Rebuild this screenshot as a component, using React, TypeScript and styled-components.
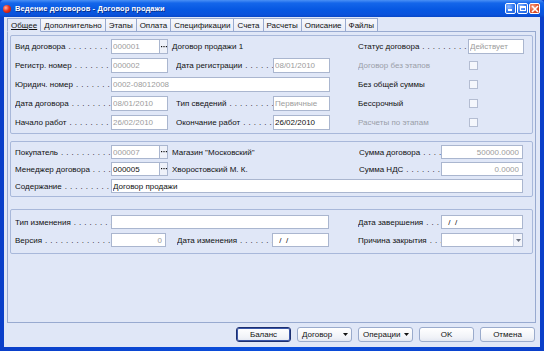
import React from 'react';
import styled, { createGlobalStyle } from 'styled-components';

const GlobalStyle = createGlobalStyle`
  html, body {
    margin: 0;
    padding: 0;
    background: #ffffff;
  }
  body {
    font-family: "Liberation Sans", Arial, sans-serif;
    font-size: 8px;
    color: #111111;
  }
`;

const tabs = [
  'Общее',
  'Дополнительно',
  'Этапы',
  'Оплата',
  'Спецификации',
  'Счета',
  'Расчеты',
  'Описание',
  'Файлы',
];

function App() {
  return (
    <>
      <GlobalStyle />
      <Window>
        <TitleBar>
          <AppIcon />
          <Title>Ведение договоров - Договор продажи</Title>
          <Controls>
            <CtrlButton>
              <MinGlyph />
            </CtrlButton>
            <CtrlButton>
              <MaxGlyph />
            </CtrlButton>
            <CtrlButton $close>
              <svg width="8" height="8" viewBox="0 0 8 8">
                <path d="M1 1L7 7M7 1L1 7" stroke="#fff" strokeWidth="1.6" />
              </svg>
            </CtrlButton>
          </Controls>
        </TitleBar>

        <Frame>
          <TabStrip>
            {tabs.map((t, i) => (
              <Tab key={t} $active={i === 0}>
                {t}
              </Tab>
            ))}
          </TabStrip>

          <TabPanel>
            <Group $pt={3} $pb={3}>
              <Grid $cols="96px 57px 8px 97px 57px 28px 110px 56px" $row={15} $gap={4}>
                <Label $col="1" $dots>Вид договора</Label>
                <Cell $col="2">
                  <Field $muted value="000001" readOnly />
                  <Ellipsis />
                </Cell>
                <Text $col="3 / 6">Договор продажи 1</Text>
                <Label $col="7" $dots>Статус договора</Label>
                <Cell $col="8">
                  <Field $muted value="Действует" readOnly />
                </Cell>

                <Label $col="1" $dots>Регистр. номер</Label>
                <Cell $col="2">
                  <Field $muted value="000002" readOnly />
                </Cell>
                <Label $col="4" $dots>Дата регистрации</Label>
                <Cell $col="5">
                  <Field $muted value="08/01/2010" readOnly />
                </Cell>
                <Label $col="7" $muted>Договор без этапов</Label>
                <Cell $col="8">
                  <Check />
                </Cell>

                <Label $col="1" $dots>Юридич. номер</Label>
                <Cell $col="2 / 6">
                  <Field $muted value="0002-08012008" readOnly />
                </Cell>
                <Label $col="7">Без общей суммы</Label>
                <Cell $col="8">
                  <Check />
                </Cell>

                <Label $col="1" $dots>Дата договора</Label>
                <Cell $col="2">
                  <Field $muted value="08/01/2010" readOnly />
                </Cell>
                <Label $col="4" $dots>Тип сведений</Label>
                <Cell $col="5">
                  <Field $muted value="Первичные" readOnly />
                </Cell>
                <Label $col="7">Бессрочный</Label>
                <Cell $col="8">
                  <Check />
                </Cell>

                <Label $col="1" $dots>Начало работ</Label>
                <Cell $col="2">
                  <Field $muted value="26/02/2010" readOnly />
                </Cell>
                <Label $col="4" $dots>Окончание работ</Label>
                <Cell $col="5">
                  <Field value="26/02/2010" readOnly />
                </Cell>
                <Label $col="7" $muted>Расчеты по этапам</Label>
                <Cell $col="8">
                  <Check />
                </Cell>
              </Grid>
            </Group>

            <Group $mt={7} $pt={3} $pb={3}>
              <Grid $cols="96px 57px 191px 82px 82px" $row={14} $gap={3}>
                <Label $col="1" $dots>Покупатель</Label>
                <Cell $col="2">
                  <Field $muted value="000007" readOnly />
                  <Ellipsis />
                </Cell>
                <Text $col="3">Магазин "Московский"</Text>
                <Label $col="4" $dots>Сумма договора</Label>
                <Cell $col="5">
                  <Field $muted $right value="50000.0000" readOnly />
                </Cell>

                <Label $col="1" $dots>Менеджер договора</Label>
                <Cell $col="2">
                  <Field value="000005" readOnly />
                  <Ellipsis />
                </Cell>
                <Text $col="3">Хворостовский М. К.</Text>
                <Label $col="4" $dots>Сумма НДС</Label>
                <Cell $col="5">
                  <Field $muted $right value="0.0000" readOnly />
                </Cell>

                <Label $col="1" $dots>Содержание</Label>
                <Cell $col="2 / 6">
                  <Field value="Договор продажи" readOnly />
                </Cell>
              </Grid>
            </Group>

            <Group $mt={12} $pt={5} $pb={6}>
              <Grid $cols="96px 55px 11px 95px 57px 29px 83px 82px" $row={14} $gap={4}>
                <Label $col="1" $dots>Тип изменения</Label>
                <Cell $col="2 / 6">
                  <Field value="" readOnly />
                </Cell>
                <Label $col="7" $dots>Дата завершения</Label>
                <Cell $col="8">
                  <Field $date value=" /  /" readOnly />
                </Cell>

                <Label $col="1" $dots>Версия</Label>
                <Cell $col="2">
                  <Field $muted $right value="0" readOnly />
                </Cell>
                <Label $col="4" $dots>Дата изменения</Label>
                <Cell $col="5">
                  <Field $date value=" /  /" readOnly />
                </Cell>
                <Label $col="7" $dots>Причина закрытия</Label>
                <Cell $col="8">
                  <Combo>
                    <ComboArrow>
                      <svg width="5" height="3" viewBox="0 0 5 3">
                        <path d="M0 0H5L2.5 3Z" fill="#6b7280" />
                      </svg>
                    </ComboArrow>
                  </Combo>
                </Cell>
              </Grid>
            </Group>
          </TabPanel>

          <Footer>
            <Button $default>Баланс</Button>
            <Button $menu>
              Договор
              <Caret />
            </Button>
            <Button $menu>
              Операции
              <Caret />
            </Button>
            <Button>OK</Button>
            <Button>Отмена</Button>
          </Footer>
        </Frame>
      </Window>
    </>
  );
}

function Caret() {
  return (
    <CaretBox>
      <svg width="5" height="3" viewBox="0 0 5 3">
        <path d="M0 0H5L2.5 3Z" fill="#111" />
      </svg>
    </CaretBox>
  );
}

function Ellipsis() {
  return (
    <EllipsisBox>
      <svg width="6" height="2" viewBox="0 0 6 2">
        <rect x="0" y="0" width="1.2" height="1.2" fill="#111" />
        <rect x="2.4" y="0" width="1.2" height="1.2" fill="#111" />
        <rect x="4.8" y="0" width="1.2" height="1.2" fill="#111" />
      </svg>
    </EllipsisBox>
  );
}

export default App;

const Window = styled.div`
  width: 544px;
  height: 351px;
  box-sizing: border-box;
  display: flex;
  flex-direction: column;
  background: linear-gradient(90deg, #0a3fc9, #0b4fdc 50%, #0a3fc9);
`;

const TitleBar = styled.div`
  height: 17px;
  flex: none;
  display: flex;
  align-items: center;
  padding: 0 3px 0 3px;
  background: linear-gradient(
    #4a90f5 0%,
    #1466ea 18%,
    #0758e2 55%,
    #0a53dc 85%,
    #0847c8 100%
  );
  border-radius: 4px 4px 0 0;
`;

const AppIcon = styled.span`
  width: 8px;
  height: 8px;
  border-radius: 50%;
  background: radial-gradient(circle at 35% 35%, #ffb0a0 0%, #e8321e 45%, #9c1408 100%);
  margin-right: 4px;
`;

const Title = styled.span`
  flex: 1;
  color: #ffffff;
  font-weight: bold;
  font-size: 7.5px;
  letter-spacing: 0.1px;
  text-shadow: 1px 1px 0 #0a2f8c;
  white-space: nowrap;
`;

const Controls = styled.div`
  display: flex;
  gap: 1px;
  margin-right: 1px;
`;

const CtrlButton = styled.span<{ $close?: boolean }>`
  width: 11px;
  height: 11px;
  box-sizing: border-box;
  border: 1px solid #ffffff;
  border-radius: 2px;
  display: flex;
  align-items: center;
  justify-content: center;
  position: relative;
  background: ${(p) =>
    p.$close
      ? 'radial-gradient(circle at 30% 30%, #f6a184, #e1542c 55%, #c2341a)'
      : 'radial-gradient(circle at 30% 30%, #8cb8ff, #3179f2 55%, #2260d6)'};
`;

const MinGlyph = styled.span`
  position: absolute;
  left: 2px;
  bottom: 2px;
  width: 4px;
  height: 2px;
  background: #ffffff;
`;

const MaxGlyph = styled.span`
  width: 6px;
  height: 5px;
  box-sizing: border-box;
  border: 1px solid #ffffff;
  border-top-width: 2px;
`;

const Frame = styled.div`
  flex: 1;
  margin: 0 4px 4px;
  padding: 1px 4px 0 3px;
  background: #e0e7f7;
  display: flex;
  flex-direction: column;
  min-height: 0;
`;

const TabStrip = styled.div`
  display: flex;
  height: 14px;
  flex: none;
  position: relative;
  z-index: 1;
`;

const Tab = styled.div<{ $active?: boolean }>`
  display: flex;
  align-items: center;
  padding: 0 3px;
  border: 1px solid #98aad0;
  border-left-width: ${(p) => (p.$active ? '1px' : '0')};
  border-bottom: ${(p) => (p.$active ? '1px solid #e0e7f7' : '1px solid #98aad0')};
  background: ${(p) => (p.$active ? '#e0e7f7' : 'linear-gradient(#f7f8fc, #e8ecf7)')};
  text-decoration: ${(p) => (p.$active ? 'underline' : 'none')};
  white-space: nowrap;
  color: #111;
`;

const TabPanel = styled.div`
  flex: 1;
  margin-top: -1px;
  border: 1px solid #98aad0;
  padding: 3px 2px;
  display: flex;
  flex-direction: column;
  min-height: 0;
`;

const Group = styled.div<{ $mt?: number; $pt: number; $pb: number }>`
  margin-top: ${(p) => p.$mt ?? 0}px;
  padding: ${(p) => p.$pt}px 4px ${(p) => p.$pb}px;
  border: 1px solid #a8b8da;
  border-radius: 2px;
`;

const Grid = styled.div<{ $cols: string; $row: number; $gap: number }>`
  display: grid;
  grid-template-columns: ${(p) => p.$cols};
  grid-auto-rows: ${(p) => p.$row}px;
  row-gap: ${(p) => p.$gap}px;
  align-items: center;
`;

const Cell = styled.div<{ $col: string }>`
  grid-column: ${(p) => p.$col};
  display: flex;
  align-items: center;
  height: 100%;
  min-width: 0;
`;

const Label = styled.div<{ $col: string; $dots?: boolean; $muted?: boolean }>`
  grid-column: ${(p) => p.$col};
  display: flex;
  min-width: 0;
  white-space: nowrap;
  overflow: hidden;
  color: ${(p) => (p.$muted ? '#9a9ea8' : '#111111')};

  &::after {
    content: ${(p) =>
      p.$dots
        ? '". . . . . . . . . . . . . . . . . . . . . . . . . . . . . . . . ."'
        : 'none'};
    flex: 1;
    min-width: 0;
    overflow: hidden;
    padding-left: 3px;
    letter-spacing: 0.4px;
    white-space: pre;
  }
`;

const Text = styled.div<{ $col: string }>`
  grid-column: ${(p) => p.$col};
  padding-left: 4px;
  white-space: nowrap;
  color: #111111;
`;

const Field = styled.input<{ $muted?: boolean; $right?: boolean; $date?: boolean }>`
  flex: 1;
  min-width: 0;
  width: 100%;
  height: 100%;
  box-sizing: border-box;
  margin: 0;
  padding: 0 ${(p) => (p.$right ? '3px' : '1px')} 0 ${(p) => (p.$date ? '4px' : '1px')};
  border: 1px solid #aab6cf;
  border-radius: 0;
  background: #ffffff;
  font-family: inherit;
  font-size: 8px;
  color: ${(p) => (p.$muted ? '#9c9c9c' : '#111111')};
  text-align: ${(p) => (p.$right ? 'right' : 'left')};
  outline: none;
`;

const EllipsisBox = styled.span`
  flex: none;
  width: 8px;
  height: 100%;
  box-sizing: border-box;
  border: 1px solid #aab6cf;
  border-left: none;
  background: #eef1f9;
  display: flex;
  align-items: center;
  justify-content: center;
`;

const Check = styled.span`
  width: 7px;
  height: 7px;
  margin-left: 1px;
  border: 1px solid #b4bdd2;
  background: #f5f7fc;
`;

const Combo = styled.div`
  flex: 1;
  height: 100%;
  box-sizing: border-box;
  border: 1px solid #aab6cf;
  background: #ffffff;
  display: flex;
  justify-content: flex-end;
`;

const ComboArrow = styled.span`
  width: 8px;
  border-left: 1px solid #d4dae8;
  background: #f3f5fb;
  display: flex;
  align-items: center;
  justify-content: center;
`;

const Footer = styled.div`
  height: 24px;
  flex: none;
  display: flex;
  justify-content: flex-end;
  align-items: flex-start;
  gap: 6px;
  padding: 4px 1px 0 0;
  box-sizing: border-box;
`;

const Button = styled.div<{ $default?: boolean; $menu?: boolean }>`
  width: 55px;
  height: 15px;
  box-sizing: border-box;
  display: flex;
  align-items: center;
  justify-content: ${(p) => (p.$menu ? 'space-between' : 'center')};
  padding: ${(p) => (p.$menu ? '0 3px 0 4px' : '0')};
  border-radius: 3px;
  border: 1px solid ${(p) => (p.$default ? '#1c2f70' : '#9aabcc')};
  box-shadow: ${(p) => (p.$default ? 'inset 0 0 0 1px #3a56a8' : 'none')};
  background: linear-gradient(#ffffff, #f1f3f8 70%, #e4e8f2);
  color: #111111;
  white-space: nowrap;
`;

const CaretBox = styled.span`
  display: flex;
  align-items: center;
  padding-left: 2px;
`;
